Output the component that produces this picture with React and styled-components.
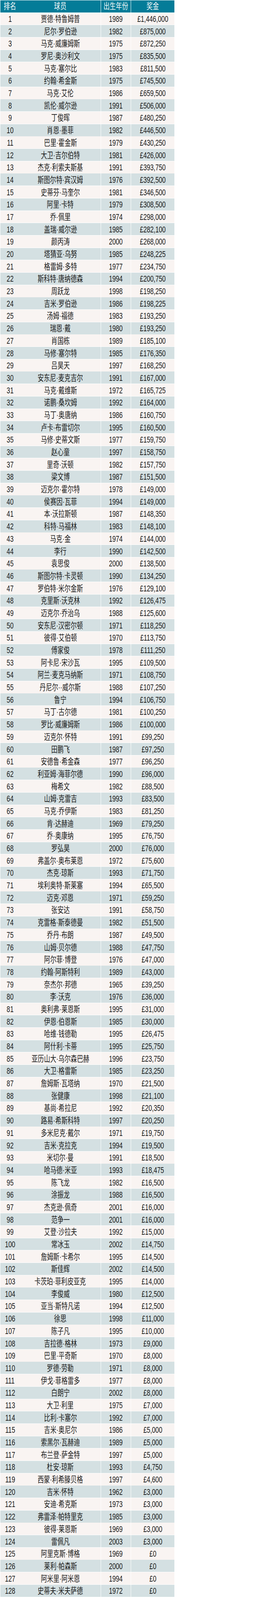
import styled, { createGlobalStyle } from "styled-components";

const GlobalStyle = createGlobalStyle`
  html, body {
    margin: 0;
    padding: 0;
    background: #ffffff;
  }
`;

const players = [
  ["贾德·特鲁姆普", 1989, "£1,446,000"],
  ["尼尔·罗伯逊", 1982, "£875,000"],
  ["马克·威廉姆斯", 1975, "£872,250"],
  ["罗尼·奥沙利文", 1975, "£835,500"],
  ["马克·塞尔比", 1983, "£811,500"],
  ["约翰·希金斯", 1975, "£745,500"],
  ["马克·艾伦", 1986, "£659,500"],
  ["凯伦·威尔逊", 1991, "£506,000"],
  ["丁俊晖", 1987, "£480,250"],
  ["肖恩·墨菲", 1982, "£446,500"],
  ["巴里·霍金斯", 1979, "£430,250"],
  ["大卫·吉尔伯特", 1981, "£426,000"],
  ["杰克·利索夫斯基", 1991, "£393,750"],
  ["斯图尔特·宾汉姆", 1976, "£392,500"],
  ["史蒂芬·马奎尔", 1981, "£346,500"],
  ["阿里·卡特", 1979, "£308,500"],
  ["乔·佩里", 1974, "£298,000"],
  ["盖瑞·威尔逊", 1985, "£282,100"],
  ["颜丙涛", 2000, "£268,000"],
  ["塔猜亚·乌努", 1985, "£248,225"],
  ["格雷姆·多特", 1977, "£234,750"],
  ["斯科特·唐纳德森", 1994, "£200,750"],
  ["周跃龙", 1998, "£198,250"],
  ["吉米·罗伯逊", 1986, "£198,225"],
  ["汤姆·福德", 1983, "£193,250"],
  ["瑞恩·戴", 1980, "£193,250"],
  ["肖国栋", 1989, "£185,100"],
  ["马修·塞尔特", 1985, "£176,350"],
  ["吕昊天", 1997, "£168,250"],
  ["安东尼·麦克吉尔", 1991, "£167,000"],
  ["马克·戴维斯", 1972, "£165,725"],
  ["诺鹏·桑坎姆", 1992, "£164,000"],
  ["马丁·奥唐纳", 1986, "£160,750"],
  ["卢卡·布雷切尔", 1995, "£160,500"],
  ["马修·史蒂文斯", 1977, "£159,750"],
  ["赵心童", 1997, "£158,750"],
  ["里奇·沃顿", 1982, "£157,750"],
  ["梁文博", 1987, "£151,500"],
  ["迈克尔·霍尔特", 1978, "£149,000"],
  ["侯赛因·瓦菲", 1994, "£149,000"],
  ["本·沃拉斯顿", 1987, "£148,350"],
  ["科特·马福林", 1983, "£148,100"],
  ["马克·金", 1974, "£144,000"],
  ["李行", 1990, "£142,500"],
  ["袁思俊", 2000, "£138,500"],
  ["斯图尔特·卡灵顿", 1990, "£134,250"],
  ["罗伯特·米尔金斯", 1976, "£129,100"],
  ["克里斯·沃克林", 1992, "£126,475"],
  ["迈克尔·乔治乌", 1988, "£125,600"],
  ["安东尼·汉密尔顿", 1971, "£118,250"],
  ["彼得·艾伯顿", 1970, "£113,750"],
  ["傅家俊", 1978, "£111,250"],
  ["阿卡尼·宋沙瓦", 1995, "£109,500"],
  ["阿兰·麦克马纳斯", 1971, "£108,750"],
  ["丹尼尔··威尔斯", 1988, "£107,250"],
  ["鲁宁", 1994, "£106,750"],
  ["马丁·古尔德", 1981, "£100,250"],
  ["罗比·威廉姆斯", 1986, "£100,000"],
  ["迈克尔·怀特", 1991, "£99,250"],
  ["田鹏飞", 1987, "£97,250"],
  ["安德鲁·希金森", 1977, "£96,250"],
  ["利亚姆·海菲尔德", 1990, "£96,000"],
  ["梅希文", 1982, "£88,500"],
  ["山姆·克雷吉", 1993, "£83,500"],
  ["马克·乔伊斯", 1983, "£81,250"],
  ["肯·达赫迪", 1969, "£79,250"],
  ["乔·奥康纳", 1995, "£76,750"],
  ["罗弘昊", 2000, "£76,000"],
  ["弗盖尔·奥布莱恩", 1972, "£75,600"],
  ["杰克·琼斯", 1993, "£71,750"],
  ["埃利奥特·斯莱塞", 1994, "£65,500"],
  ["迈克·邓恩", 1971, "£59,250"],
  ["张安达", 1991, "£58,750"],
  ["克雷格·斯泰德曼", 1982, "£51,500"],
  ["乔丹·布朗", 1987, "£49,500"],
  ["山姆·贝尔德", 1988, "£47,750"],
  ["阿尔菲·博登", 1976, "£47,000"],
  ["约翰·阿斯特利", 1989, "£43,000"],
  ["奈杰尔·邦德", 1965, "£39,250"],
  ["李·沃克", 1976, "£36,000"],
  ["奥利弗·莱恩斯", 1995, "£31,000"],
  ["伊恩·伯恩斯", 1985, "£30,000"],
  ["哈维·钱德勒", 1995, "£26,475"],
  ["阿什利·卡蒂", 1995, "£25,750"],
  ["亚历山大·乌尔森巴赫", 1996, "£23,750"],
  ["大卫·格雷斯", 1985, "£23,250"],
  ["詹姆斯·瓦塔纳", 1970, "£21,500"],
  ["张健康", 1998, "£21,100"],
  ["基尚·希拉尼", 1992, "£20,350"],
  ["路易·希斯科特", 1997, "£20,250"],
  ["多米尼克·戴尔", 1971, "£19,750"],
  ["吉米·克拉克", 1994, "£19,500"],
  ["米切尔·曼", 1991, "£18,500"],
  ["哈马德·米亚", 1993, "£18,475"],
  ["陈飞龙", 1982, "£16,500"],
  ["涂振龙", 1988, "£16,500"],
  ["杰克逊·佩奇", 2001, "£16,000"],
  ["范争一", 2001, "£16,000"],
  ["艾登·沙拉夫", 1992, "£15,000"],
  ["常冰玉", 2002, "£14,750"],
  ["詹姆斯·卡希尔", 1995, "£14,500"],
  ["斯佳辉", 2002, "£14,500"],
  ["卡茨珀·菲利皮亚克", 1995, "£14,000"],
  ["李俊威", 1980, "£12,500"],
  ["亚当·斯特凡诺", 1994, "£12,500"],
  ["徐思", 1998, "£11,000"],
  ["陈子凡", 1995, "£10,000"],
  ["吉拉德·格林", 1973, "£9,000"],
  ["巴里·平奇斯", 1970, "£8,000"],
  ["罗德·劳勒", 1971, "£8,000"],
  ["伊戈·菲格雷多", 1977, "£8,000"],
  ["白朗宁", 2002, "£8,000"],
  ["大卫·利里", 1975, "£7,000"],
  ["比利·卡塞尔", 1992, "£7,000"],
  ["吉米·奥尼尔", 1986, "£5,000"],
  ["索黑尔·瓦赫迪", 1989, "£5,000"],
  ["布兰登·萨金特", 1997, "£5,000"],
  ["杜安·琼斯", 1993, "£4,750"],
  ["西蒙·利希滕贝格", 1997, "£4,600"],
  ["吉米·怀特", 1962, "£3,000"],
  ["安迪·希克斯", 1973, "£3,000"],
  ["弗雷泽·帕特里克", 1985, "£3,000"],
  ["彼得·莱恩斯", 1969, "£3,000"],
  ["雷佩凡", 2003, "£3,000"],
  ["阿里克斯·博格", 1969, "£0"],
  ["莱利·帕森斯", 2000, "£0"],
  ["阿米里·阿米恩", 1994, "£0"],
  ["史蒂夫·米夫萨德", 1972, "£0"],
];

// the sheet is drawn at 6/7 of its nominal pixel sizes
const Table = styled.div`
  zoom: 0.857143;
  display: flex;
  flex-direction: column;
  gap: 1px;
  width: 521px;
  padding: 1px;
  background: #ffffff;
  font-family: "Liberation Sans", "Noto Sans CJK SC", sans-serif;
  font-size: 25px;
`;

const Row = styled.div`
  display: grid;
  grid-template-columns: 58px 241px 89px 130px;
  grid-template-rows: 36px;
  gap: 1px;
  height: 36px;
  min-height: 0;
  flex-shrink: 0;
  overflow: hidden;
`;

const Cell = styled.div`
  display: flex;
  align-items: center;
  justify-content: center;
  box-sizing: border-box;
  height: 36px;
  padding-top: ${(p) => (p.$head ? "2px" : "4px")};
  overflow: hidden;
  white-space: nowrap;
  background: ${(p) => (p.$head ? "#047c98" : p.$alt ? "#d4e0e2" : "#f9f4f2")};
  color: ${(p) => (p.$head ? "#f4f7f8" : "#1a1a1a")};
`;

const Text = styled.span`
  display: inline-block;
  line-height: 25px;
  transform: scaleX(0.74);
  transform-origin: center;
`;

export default function App() {
  return (
    <>
      <GlobalStyle />
      <Table>
        <Row>
          <Cell $head><Text>排名</Text></Cell>
          <Cell $head><Text>球员</Text></Cell>
          <Cell $head><Text>出生年份</Text></Cell>
          <Cell $head><Text>奖金</Text></Cell>
        </Row>
        {players.map(([name, year, prize], i) => {
          const alt = i % 2 === 1;
          return (
            <Row key={i}>
              <Cell $alt={alt}><Text>{i + 1}</Text></Cell>
              <Cell $alt={alt}><Text>{name}</Text></Cell>
              <Cell $alt={alt}><Text>{year}</Text></Cell>
              <Cell $alt={alt}><Text>{prize}</Text></Cell>
            </Row>
          );
        })}
      </Table>
    </>
  );
}
